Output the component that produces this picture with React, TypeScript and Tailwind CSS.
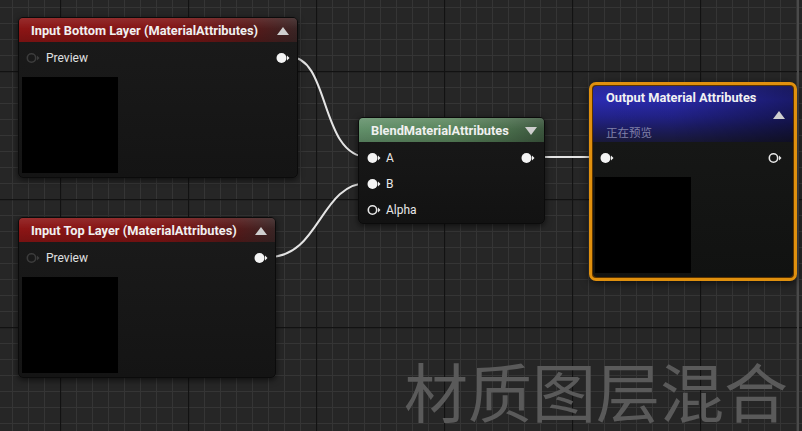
import React from "react";

const FONT = { fontFamily: 'Roboto, "Liberation Sans", "Noto Sans CJK SC", sans-serif' };

type PinKind = "filled" | "hollow" | "dim";

function Pin({ kind }: { kind: PinKind }) {
  if (kind === "filled") {
    return (
      <svg width="15" height="12" viewBox="0 0 15 12" className="shrink-0">
        <circle cx="5.5" cy="6" r="5" fill="#f4f4f4" />
        <polygon points="11,3.5 13.5,6 11,8.5" fill="#f4f4f4" />
      </svg>
    );
  }
  const c = kind === "hollow" ? "#e6e6e6" : "#3c3c3c";
  return (
    <svg width="15" height="12" viewBox="0 0 15 12" className="shrink-0">
      <circle cx="5.5" cy="6" r="4.2" fill="none" stroke={c} strokeWidth="1.6" />
      <polygon points="11,3.5 13.5,6 11,8.5" fill={c} />
    </svg>
  );
}

function Caret({ down = false }: { down?: boolean }) {
  return (
    <svg width="12" height="10" viewBox="0 0 12 10" className="shrink-0">
      <polygon points={down ? "0,1 12,1 6,9" : "0,9 12,9 6,1"} fill="#cfcfcf" />
    </svg>
  );
}

function InputNode({ title, left, top, width }: { title: string; left: number; top: number; width: number }) {
  return (
    <div
      className="absolute rounded-[5px] border border-[#0b0b0b] bg-[linear-gradient(180deg,#1b1b1b,#141414)] shadow-[0_2px_6px_rgba(0,0,0,0.6)] overflow-hidden"
      style={{ left, top, width, height: 161 }}
    >
      <div className="h-[24px] flex items-center justify-between pl-[12px] pr-[8px] pt-[1px] bg-[linear-gradient(180deg,rgba(255,255,255,0.1)_0%,rgba(255,255,255,0)_45%,rgba(0,0,0,0.15)_100%),linear-gradient(90deg,#8c1515_0%,#821414_55%,#5a1818_82%,#3a2525_100%)]">
        <span className="text-[12.8px] font-bold text-[#f0f0f0]">{title}</span>
        <Caret />
      </div>
      <div className="h-[32px] flex items-center justify-between pl-[7px] pr-[6px]">
        <div className="flex items-center gap-[5px]">
          <Pin kind="dim" />
          <span className="text-[12px] text-[#e0e0e0]">Preview</span>
        </div>
        <Pin kind="filled" />
      </div>
      <div className="mt-[3px] ml-[3px] w-[96px] h-[96px] bg-black" />
    </div>
  );
}

function BlendNode() {
  const rows: { label: string; kind: PinKind; out?: boolean }[] = [
    { label: "A", kind: "filled", out: true },
    { label: "B", kind: "filled" },
    { label: "Alpha", kind: "hollow" },
  ];
  return (
    <div
      className="absolute rounded-[5px] border border-[#0b0b0b] bg-[linear-gradient(180deg,#191919,#121212)] shadow-[0_2px_6px_rgba(0,0,0,0.6)] overflow-hidden"
      style={{ left: 358, top: 117, width: 187, height: 107 }}
    >
      <div className="h-[24px] flex items-center justify-between pl-[12px] pr-[7px] pt-[1px] bg-[linear-gradient(180deg,rgba(255,255,255,0.12)_0%,rgba(255,255,255,0)_45%,rgba(0,0,0,0.15)_100%),linear-gradient(90deg,#62906a_0%,#5a855c_50%,#4a6e4c_80%,#3c573e_100%)]">
        <span className="text-[12.8px] font-bold text-[#f0f0f0]">BlendMaterialAttributes</span>
        <Caret down />
      </div>
      <div className="pt-[3px] flex flex-col">
        {rows.map((r) => (
          <div key={r.label} className="h-[26px] flex items-center justify-between pl-[8px] pr-[8px]">
            <div className="flex items-center gap-[4px]">
              <Pin kind={r.kind} />
              <span className="text-[12px] text-[#e8e8e8]">{r.label}</span>
            </div>
            {r.out && <Pin kind="filled" />}
          </div>
        ))}
      </div>
    </div>
  );
}

function OutputNode() {
  return (
    <div
      className="absolute rounded-[7px] border-[3px] border-[#e0900e] bg-[#5a3300] p-[1px] shadow-[0_2px_8px_rgba(0,0,0,0.6)]"
      style={{ left: 589, top: 82, width: 208, height: 199 }}
    >
      <div className="h-full rounded-[4px] overflow-hidden bg-[linear-gradient(180deg,#181918,#111211)]">
        <div className="h-[56px] relative pl-[13px] pt-[3px] bg-[linear-gradient(90deg,rgba(0,0,0,0)_0%,rgba(0,0,0,0.05)_40%,rgba(0,0,0,0.4)_100%),linear-gradient(180deg,#2a2a9c_0%,#2b2bb0_25%,#22228a_55%,#1c1c5c_80%,#19193a_100%)]">
          <div className="text-[12.8px] font-bold text-[#f2f2f2] leading-[18px]">Output Material Attributes</div>
          <div className="absolute right-[8px] top-[24px]">
            <Caret />
          </div>
          <div className="mt-[18px] text-[11.5px] text-[#8080a8] leading-[16px]">正在预览</div>
        </div>
        <div className="h-[32px] flex items-center justify-between pl-[7px] pr-[10px]">
          <Pin kind="filled" />
          <Pin kind="hollow" />
        </div>
        <div className="mt-[3px] ml-[2px] w-[96px] h-[96px] bg-black" />
      </div>
    </div>
  );
}

export default function App() {
  return (
    <div className="relative w-[802px] h-[431px] overflow-hidden bg-[#262626]" style={FONT}>
      <svg className="absolute inset-0" width="802" height="431">
        <defs>
          <pattern id="minor" x="12" y="7" width="16" height="16" patternUnits="userSpaceOnUse">
            <path d="M0 0.5 H16 M0.5 0 V16" stroke="#353535" strokeWidth="1" fill="none" />
          </pattern>
          <pattern id="major" x="60" y="71" width="128" height="128" patternUnits="userSpaceOnUse">
            <path d="M0 0.5 H128 M0.5 0 V128" stroke="#121212" strokeWidth="1.3" fill="none" />
          </pattern>
        </defs>
        <rect width="802" height="431" fill="url(#minor)" />
        <rect width="802" height="431" fill="url(#major)" />
        <rect x="797" y="0" width="2" height="431" fill="#4a4a4a" />
        <path d="M290 57 C 330 57, 320 157, 368 157" stroke="#e4e4e4" strokeWidth="2" fill="none" />
        <path d="M269 257 C 320 257, 320 183, 368 183" stroke="#e4e4e4" strokeWidth="2" fill="none" />
        <path d="M538 157 L 604 157" stroke="#e4e4e4" strokeWidth="2" fill="none" />
      </svg>

      <InputNode title="Input Bottom Layer (MaterialAttributes)" left={18} top={17} width={280} />
      <InputNode title="Input Top Layer (MaterialAttributes)" left={18} top={217} width={258} />
      <BlendNode />
      <OutputNode />

      <div
        className="absolute left-[404px] top-[354px] text-[64px] leading-[70px] text-[#5a5a5a]"
        style={{ fontFamily: '"Noto Sans CJK SC", sans-serif' }}
      >
        材质图层混合
      </div>
    </div>
  );
}
